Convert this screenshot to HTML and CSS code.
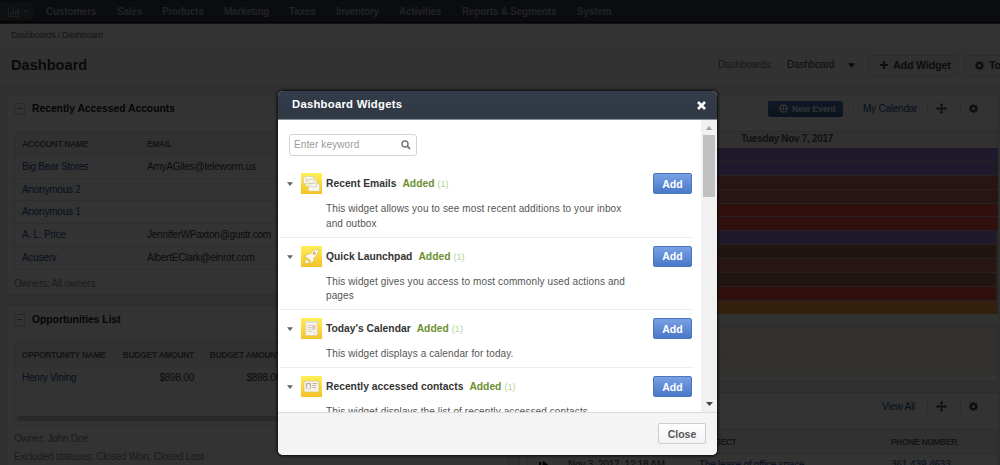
FILE: index.html
```html
<!DOCTYPE html>
<html lang="en">
<head>
<meta charset="utf-8">
<title>Dashboard</title>
<link rel="stylesheet" href="styles.css">
</head>
<body>
<svg class="defs" width="0" height="0">
  <defs>
    <linearGradient id="yellow" x1="0" y1="0" x2="0" y2="1"><stop offset="0" stop-color="#fff05a"/><stop offset=".5" stop-color="#fbd93a"/><stop offset="1" stop-color="#f3c229"/></linearGradient>
    <symbol id="gear" viewBox="0 0 10 10"><path fill-rule="evenodd" d="M4.2 0h1.6l.25 1.2.9.4L8 .9 9.1 2l-.7 1.05.4.9 1.2.25v1.6l-1.2.25-.4.9L9.1 8 8 9.1l-1.05-.7-.9.4L5.8 10H4.2l-.25-1.2-.9-.4L2 9.1.9 8l.7-1.05-.4-.9L0 5.8V4.2l1.2-.25.4-.9L.9 2 2 .9l1.05.7.9-.4zM5 3.2a1.8 1.8 0 1 0 0 3.6 1.8 1.8 0 0 0 0-3.6z"/></symbol>
    <symbol id="move" viewBox="0 0 12 12"><path d="M6 0l2.2 2.4H6.7v2.9h2.9V3.8L12 6 9.6 8.2V6.7H6.7v2.9h1.5L6 12 3.8 9.6h1.5V6.7H2.4v1.5L0 6l2.4-2.2v1.5h2.9V2.4H3.8z"/></symbol>
    <symbol id="caret" viewBox="0 0 8 5"><path d="M0 0h8L4 5z"/></symbol>
  </defs>
</svg>
<div class="page">
  <nav class="nav">
    <div class="nav-home">
      <svg width="12" height="10" viewBox="0 0 12 10"><path d="M0 0h1v9h11v1H0zM2 5h1.6v3H2zM4.500 2h1.600v6H4.500zM7 4h1.600v4H7zM9.400 1H11v7H9.400z"/></svg>
      <svg width="5" height="3"><use href="#caret"/></svg>
    </div>
    <span class="n1">Customers</span><span class="n2">Sales</span><span class="n3">Products</span><span class="n4">Marketing</span><span class="n5">Taxes</span><span class="n6">Inventory</span><span class="n7">Activities</span><span class="n8">Reports &amp; Segments</span><span class="n9">System</span>
  </nav>
  <div class="crumbs">Dashboards / Dashboard</div>
  <header class="title">
    <h1>Dashboard</h1>
    <span class="pick-label">Dashboards:</span>
    <div class="select"><span>Dashboard</span><svg width="7" height="5"><use href="#caret"/></svg></div>
    <div class="btn add-widget"><svg width="8" height="8" viewBox="0 0 8 8"><path d="M3 0h2v3h3v2H5v3H3V5H0V3h3z"/></svg><span>Add Widget</span></div>
    <div class="btn tools"><svg width="9" height="9"><use href="#gear"/></svg><span>Tools</span></div>
  </header>
  <main class="cols">
    <div class="col left">
      <section class="widget w-accounts">
        <div class="w-head"><i class="toggle"></i><h2>Recently Accessed Accounts</h2></div>
        <div class="table accounts">
          <div class="tr th"><span>ACCOUNT NAME</span><span>EMAIL</span></div>
          <div class="tr"><a>Big Bear Stores</a><span>AmyAGiles@teleworm.us</span></div>
          <div class="tr"><a>Anonymous 2</a></div>
          <div class="tr"><a>Anonymous 1</a></div>
          <div class="tr"><a>A. L. Price</a><span>JenniferWPaxton@gustr.com</span></div>
          <div class="tr"><a>Acuserv</a><span>AlbertEClark@einrot.com</span></div>
        </div>
        <p class="note owners">Owners: All owners</p>
      </section>
      <section class="widget w-opps">
        <div class="w-head"><i class="toggle"></i><h2>Opportunities List</h2></div>
        <div class="table opps">
          <div class="tr th"><span>OPPORTUNITY NAME</span><span>BUDGET AMOUNT</span><span>BUDGET AMOUNT</span></div>
          <div class="tr"><a>Henry Vining</a><span>$898.00</span><span>$898.00</span></div>
          <div class="hscroll"></div>
        </div>
        <p class="note n-owner">Owner: John Doe</p>
        <p class="note n-status">Excluded statuses: Closed Won; Closed Lost</p>
      </section>
    </div>
    <div class="col right">
      <section class="widget w-cal">
        <div class="w-head acts">
          <div class="new-event"><svg width="9" height="9" viewBox="0 0 9 9"><circle cx="4.500" cy="4.500" r="3.600" fill="none" stroke="#fff" stroke-width="1.500"/><path d="M4 2.300h1V4h1.700v1H5v1.700H4V5H2.300V4H4z" fill="#fff"/></svg><span>New Event</span></div>
          <div class="cell c-link"><a>My Calendar</a></div>
          <div class="cell"><svg width="11" height="11"><use href="#move"/></svg></div>
          <div class="cell"><svg width="9" height="9"><use href="#gear"/></svg></div>
          <div class="cell"></div>
        </div>
        <div class="day">Tuesday Nov 7, 2017</div>
        <div class="events">
          <i class="e purple"></i><i class="e purple"></i><i class="e maroon"></i><i class="e maroon"></i><i class="e red"></i><i class="e red"></i>
          <i class="e purple short"></i><i class="e brown short"></i><i class="e maroon short"></i><i class="e brown short"></i><i class="e red short"></i><i class="e orange short"></i>
        </div>
        <div class="slots"><i class="s1"></i><i class="s2"></i><i class="s3"></i><i class="s4"></i></div>
      </section>
      <section class="widget w-calls">
        <div class="w-head acts">
          <div class="cell c-link"><a>View All</a></div>
          <div class="cell"><svg width="11" height="11"><use href="#move"/></svg></div>
          <div class="cell"><svg width="9" height="9"><use href="#gear"/></svg></div>
          <div class="cell"></div>
        </div>
        <div class="table calls">
          <div class="tr th"><span></span><span>DATE</span><span>SUBJECT</span><span>PHONE NUMBER</span></div>
          <div class="tr"><span><svg width="10" height="9" viewBox="0 0 10 9"><path d="M3 1H1v7h6M5 0l5 3.500L5 7V5H3V2.500h2z"/></svg></span><span>Nov 3, 2017, 12:18 AM</span><a>The lease of office space</a><a>361-439-4633</a></div>
        </div>
      </section>
    </div>
  </main>
</div>
<div class="overlay"></div>
<div class="modal">
  <div class="m-head"><span>Dashboard Widgets</span><svg width="9" height="9" viewBox="0 0 9 9"><path d="M1 1l7 7M8 1L1 8" stroke="#fff" stroke-width="2.600"/></svg></div>
  <div class="m-body">
    <div class="m-list">
      <div class="search"><span>Enter keyword</span><svg width="10" height="10" viewBox="0 0 10 10"><circle cx="4" cy="4" r="3" fill="none" stroke="#777" stroke-width="1.400"/><path d="M6.200 6.200L9 9" stroke="#777" stroke-width="1.800"/></svg></div>
      <div class="item">
        <svg class="arrow" width="6" height="4"><use href="#caret"/></svg>
        <svg class="ico" viewBox="0 0 21 21"><rect width="21" height="21" fill="url(#yellow)"/><g fill="#faf8ee" stroke="#cfc8a8" stroke-width=".5"><path d="M2.500 3.500h10.500v7H2.500zM5 6.500h10.500v7H5zM7.500 10.500h11v7.500h-11z"/><path d="M2.500 3.500l5.200 4 5.300-4M5 6.500l5.200 4 5.300-4M7.500 10.500l5.500 4.500 5.500-4.500" fill="none"/></g></svg>
        <div class="txt"><div class="name"><b class="t1">Recent Emails</b><em>Added</em><small>(1)</small></div><p>This widget allows you to see most recent additions to your inbox<br>and outbox</p></div>
        <button class="add">Add</button>
      </div>
      <div class="item">
        <svg class="arrow" width="6" height="4"><use href="#caret"/></svg>
        <svg class="ico" viewBox="0 0 21 21"><rect width="21" height="21" fill="url(#yellow)"/><g fill="#faf8ee" stroke="#c9ab45" stroke-width=".5"><path d="M17.500 3c-4 .3-6.500 2-8.500 5H6l-2.500 3.500 3 .3 2.700 2.700.3 3L13 15v-3c3-2 4.300-5 4.500-9z"/><path d="M5.500 13l2.700 2.800-1 1.700-2-.2-1.700.7.500-2.200z"/><circle cx="13.300" cy="7.300" r="1.200" fill="#e0bd3c"/></g></svg>
        <div class="txt"><div class="name"><b class="t2">Quick Launchpad</b><em>Added</em><small>(1)</small></div><p>This widget gives you access to most commonly used actions and<br>pages</p></div>
        <button class="add">Add</button>
      </div>
      <div class="item">
        <svg class="arrow" width="6" height="4"><use href="#caret"/></svg>
        <svg class="ico" viewBox="0 0 21 21"><rect width="21" height="21" fill="url(#yellow)"/><path d="M4.500 3.500h12v14h-12z" fill="#f6f3ec" stroke="#d0c69a" stroke-width=".5"/><path d="M4.500 3.500h12v1.500h-12z" fill="#e4e2dc"/><path d="M12.500 17.800c2.500 0 4-1 4.300-4.300-1 1-2 1.300-3.200 1.200.2 1.500-.2 2.400-1.100 3.100z" fill="#fff" stroke="#c4b78c" stroke-width=".4"/><path d="M6.500 7.500h8M6.500 9.500h8M6.500 11.500h8M6.500 13.500h5" stroke="#d9d2cc"/><path d="M11.500 7h3v4h-3z" fill="#edc5b8"/></svg>
        <div class="txt"><div class="name"><b class="t3">Today's Calendar</b><em>Added</em><small>(1)</small></div><p>This widget displays a calendar for today.</p></div>
        <button class="add">Add</button>
      </div>
      <div class="item">
        <svg class="arrow" width="6" height="4"><use href="#caret"/></svg>
        <svg class="ico" viewBox="0 0 21 21"><rect width="21" height="21" fill="url(#yellow)"/><rect x="3" y="5" width="15" height="11" rx="1" fill="#f4f1e6" stroke="#cdb96a" stroke-width=".5"/><path d="M5 7h5v5.500H5z" fill="#b9b4a4"/><path d="M6 12c0-1.500.5-2 1.500-2S9 10.500 9 12z" fill="#fff"/><circle cx="7.500" cy="9" r="1.100" fill="#fff"/><path d="M11.500 7.500H16M11.500 9.500H15M11.500 11.500h3" stroke="#b9b4a4"/></svg>
        <div class="txt"><div class="name"><b class="t4">Recently accessed contacts</b><em>Added</em><small>(1)</small></div><p>This widget displays the list of recently accessed contacts</p></div>
        <button class="add">Add</button>
      </div>
    </div>
    <div class="track"><svg width="6" height="4" viewBox="0 0 6 4"><path d="M0 4h6L3 0z" fill="#a0a0a0"/></svg><div class="thumb"></div><svg width="7" height="4" viewBox="0 0 7 4"><path d="M0 0h7L3.500 4z" fill="#444"/></svg></div>
  </div>
  <div class="m-foot"><button class="close">Close</button></div>
</div>
</body>
</html>
```

FILE: styles.css
```css
* { box-sizing: border-box; }
body { margin: 0; width: 1000px; height: 465px; overflow: hidden; background: #ededed; font: 10px/14px "Liberation Sans", Arial, sans-serif; color: #444; white-space: nowrap; }
h1, h2, p { margin: 0; }
svg { display: block; flex: none; }
.defs { position: absolute; }
.page { height: 465px; overflow: hidden; letter-spacing: -.23px; }
a { color: #1d5297; }

.nav { height: 24px; display: flex; align-items: center; background: linear-gradient(#303b46, #36424f 20%, #333e49 90%, #111); border-bottom: 1px solid #5c5c5c; color: #a5a9ae; font-weight: 700; }
.nav svg { fill: #8c9299; }
.nav-home { width: 33px; height: 17px; margin-right: 13px; border-radius: 0 3px 3px 0; background: #454f5b; display: flex; align-items: center; gap: 3px; padding-left: 8px; }
.nav span { flex: none; }
.n1 { width: 71px; }
.n2 { width: 45px; }
.n3 { width: 62px; }
.n4 { width: 65px; }
.n5 { width: 47px; }
.n6 { width: 63px; }
.n7 { width: 63px; }
.n8 { width: 115px; }

.crumbs { height: 22px; padding: 4px 0 0 11px; background: #fff; font-size: 8.7px; color: #686868; }
.title { height: 38px; display: flex; align-items: center; background: #fbfbfb; overflow: hidden; }
h1 { width: 718px; flex: none; padding-left: 11px; font-size: 14.6px; letter-spacing: 0; color: #333; }
.pick-label { width: 61px; flex: none; padding-bottom: 1px; color: #777; letter-spacing: -.15px; }
.select { width: 82px; height: 20px; flex: none; letter-spacing: -.2px; display: flex; align-items: center; justify-content: space-between; padding: 0 5px 0 7px; border: 1px solid #eaeaea; border-radius: 3px; margin-right: 7px; }
.btn { height: 21px; display: flex; align-items: center; border: 1px solid #d9d9d9; border-radius: 3px; background: #f4f4f4; font-size: 10.8px; font-weight: 700; flex: none; }
.btn svg { fill: #444; }
.add-widget { width: 91px; padding-left: 11px; gap: 5px; margin-right: 5px; }
.tools { width: 60px; padding-left: 10px; gap: 5px; }
.select svg { fill: #333; }

.cols { display: flex; gap: 10px; padding: 10px 0 0 6px; height: 381px; }
.col { display: flex; flex-direction: column; flex: none; }
.left { width: 503px; gap: 10px; }
.right { width: 480px; gap: 10px; }
.widget { border: 1px solid #dcdcdc; border-radius: 3px; background: #fcfcfc; overflow: hidden; flex: none; }
.w-accounts { height: 201px; }
.w-opps { height: 180px; }
.w-head { height: 28px; display: flex; align-items: center; padding: 0 0 0 7px; border-bottom: 1px solid #e8e8e8; }
h2 { font-size: 10.3px; letter-spacing: 0; color: #222; }
.toggle { width: 11px; height: 12px; border: 1px solid #ccc; margin-right: 7px; background: linear-gradient(#777, #777) center / 5px 1px no-repeat; }
.table { margin: 8px 0 0 7px; border: 1px solid #e0e0e0; border-radius: 3px; }
.tr { display: flex; align-items: center; height: 22.7px; padding-left: 7px; border-bottom: 1px solid #e6e6e6; }
.tr:last-child { border-bottom: 0; }
.tr > * { flex: none; }
.th { height: 24px; font-size: 8.4px; font-weight: 700; color: #666; background: #f6f6f6; }
.accounts > .tr > :first-child { width: 125px; }
.opps > .tr > :first-child { width: 85px; }
.opps > .tr > span:nth-child(n+2) { width: 87px; text-align: right; }
.note { color: #8a8a8a; padding-left: 7px; }
.owners { margin-top: 7px; }
.opps { height: 84px; }
.opps .tr { border-bottom: 0; }
.opps .th { border-bottom: 1px solid #e4e4e4; }
.hscroll { height: 5px; margin: 26px 0 0 2px; background: #ccc; border-radius: 2px; }
.n-owner { margin-top: 6px; }
.n-status { margin-top: 4px; }

.acts { justify-content: flex-end; padding-right: 0; }
.acts svg { fill: #444; }
.new-event { width: 75px; height: 16px; display: flex; align-items: center; gap: 4px; padding-left: 11px; margin-right: 10px; border-radius: 2px; background: linear-gradient(#3f6fb4, #274f91); color: #fff; font-size: 8.8px; font-weight: 700; opacity: .9; letter-spacing: -.1px; }
.acts .new-event svg { fill: none; }
.cell { width: 33px; height: 14px; display: flex; align-items: center; padding-left: 8px; border-left: 1px solid #e2e2e2; flex: none; }
.cell:last-child { width: 5px; padding: 0; }
.c-link { width: 74px; padding-left: 9px; }
.w-cal { height: 288px; }
.day { height: 17px; line-height: 13px; margin-top: 8px; padding: 0 0 0 221px; border-top: 1px solid #ddd; background: #f3f3f3; font-weight: 700; color: #555; letter-spacing: -.3px; }
.events { display: flex; flex-direction: column; gap: 1px; background: #b4a8a8; }
.e { height: 12.9px; }
.short { margin-right: 2px; }
.purple { background: #a07cdd; }
.maroon { background: #c9665e; }
.red { background: #f0503c; }
.brown { background: #a5695a; }
.orange { background: #ffa546; }
.slots i { display: block; }
.slots .s1 { height: 10px; background: #f8f7ee; }
.slots .s2 { height: 4px; background: #e4e4e4; }
.slots .s3 { height: 29px; background: #fbf6e4; border-bottom: 1px solid #eae5d5; }
.slots .s4 { height: 18px; background: #fbf6e4; border-bottom: 1px solid #e4e4e4; }
.w-calls { height: 100px; }
.w-calls .c-link { width: 54px; border: 0; }
.calls > .tr > :nth-child(1) { width: 33px; padding-left: 3px; }
.calls > .tr > :nth-child(2) { width: 131px; }
.calls > .tr > :nth-child(3) { width: 192px; }

.overlay { position: absolute; left: 0; top: 0; width: 1000px; height: 465px; background: rgba(0, 0, 0, .8); }
.modal { position: absolute; left: 278px; top: 91px; width: 439px; height: 364px; border-radius: 5px; overflow: hidden; background: #fff; box-shadow: 0 0 3px 1px rgba(0, 0, 0, .8); display: flex; flex-direction: column; }
.m-head { height: 29px; flex: none; display: flex; align-items: center; justify-content: space-between; padding: 0 11px 2px 14px; background: linear-gradient(#333c4a, #303843); border-bottom: 1px solid #888e96; color: #fff; font-size: 11.3px; font-weight: 700; letter-spacing: .25px; }
.m-head svg { margin-top: 3px; }
.m-body { height: 292px; flex: none; display: flex; overflow: hidden; }
.m-list { width: 423px; padding: 14px 7px 0 2px; letter-spacing: .115px; }
.search { width: 128px; height: 22px; margin: 0 0 9px 9px; display: flex; align-items: center; justify-content: space-between; padding: 0 5px 0 4px; border: 1px solid #d4d4d4; border-radius: 3px; color: #999; }
.item { display: flex; align-items: flex-start; padding: 8px 2px 5.5px 7px; border-bottom: 1px solid #eee; }
.arrow { margin: 9px 8px 0 0; fill: #666; }
.ico { width: 21px; height: 21px; margin-right: 4px; }
.txt { flex: 1; }
.name { height: 22px; display: flex; align-items: center; color: #333; font-size: 10.3px; letter-spacing: 0; }
.name em { font-style: normal; font-weight: 700; color: #6b9130; margin: 0 3px 0 6px; }
.name small { font-size: 9.2px; color: #b8d09a; }
.txt p { padding-top: 7px; line-height: 14.5px; color: #555; }
button { font-family: inherit; padding: 0; white-space: nowrap; }
.add { width: 39px; height: 21px; flex: none; border: 1px solid #4a76bb; border-radius: 2px; background: linear-gradient(#78a0e4, #4a78c8); color: #fff; font-size: 10.5px; font-weight: 700; }
.track { width: 16px; background: #f1f1f1; display: flex; flex-direction: column; align-items: center; padding: 6px 0 6px; }
.thumb { width: 12px; height: 62px; margin: 5px 0 auto; background: #c1c1c1; }
.m-foot { flex: 1; display: flex; align-items: flex-start; justify-content: flex-end; padding: 10px 11px 0; background: #f4f4f4; border-top: 1px solid #ddd; }
.close { width: 48px; height: 21px; border: 1px solid #ccc; border-radius: 2px; background: linear-gradient(#fff, #f3f3f3); color: #555; font-size: 10.5px; font-weight: 700; }
```
